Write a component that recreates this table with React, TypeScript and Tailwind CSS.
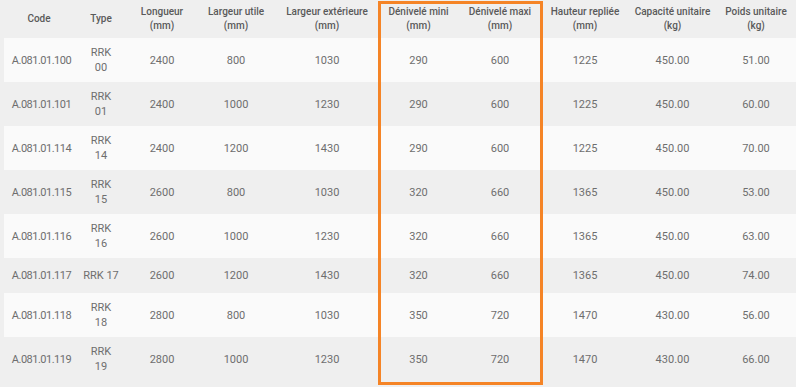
import React from "react";

type Row = {
  code: string;
  type: string;
  longueur: string;
  utile: string;
  ext: string;
  mini: string;
  maxi: string;
  hauteur: string;
  capacite: string;
  poids: string;
};

const rows: Row[] = [
  { code: "A.081.01.100", type: "RRK\n00", longueur: "2400", utile: "800", ext: "1030", mini: "290", maxi: "600", hauteur: "1225", capacite: "450.00", poids: "51.00" },
  { code: "A.081.01.101", type: "RRK\n01", longueur: "2400", utile: "1000", ext: "1230", mini: "290", maxi: "600", hauteur: "1225", capacite: "450.00", poids: "60.00" },
  { code: "A.081.01.114", type: "RRK\n14", longueur: "2400", utile: "1200", ext: "1430", mini: "290", maxi: "600", hauteur: "1225", capacite: "450.00", poids: "70.00" },
  { code: "A.081.01.115", type: "RRK\n15", longueur: "2600", utile: "800", ext: "1030", mini: "320", maxi: "660", hauteur: "1365", capacite: "450.00", poids: "53.00" },
  { code: "A.081.01.116", type: "RRK\n16", longueur: "2600", utile: "1000", ext: "1230", mini: "320", maxi: "660", hauteur: "1365", capacite: "450.00", poids: "63.00" },
  { code: "A.081.01.117", type: "RRK 17", longueur: "2600", utile: "1200", ext: "1430", mini: "320", maxi: "660", hauteur: "1365", capacite: "450.00", poids: "74.00" },
  { code: "A.081.01.118", type: "RRK\n18", longueur: "2800", utile: "800", ext: "1030", mini: "350", maxi: "720", hauteur: "1470", capacite: "430.00", poids: "56.00" },
  { code: "A.081.01.119", type: "RRK\n19", longueur: "2800", utile: "1000", ext: "1230", mini: "350", maxi: "720", hauteur: "1470", capacite: "430.00", poids: "66.00" },
];

const headers = [
  "Code",
  "Type",
  "Longueur\n(mm)",
  "Largeur utile\n(mm)",
  "Largeur extérieure\n(mm)",
  "Dénivelé mini\n(mm)",
  "Dénivelé maxi\n(mm)",
  "Hauteur repliée\n(mm)",
  "Capacité unitaire\n(kg)",
  "Poids unitaire\n(kg)",
];

const gridCols =
  "grid grid-cols-[70px_54px_68px_80px_102px_81px_82px_88px_87px_80px]";

export default function App() {
  return (
    <div className="relative w-[796px] h-[387px] bg-[#efefef] pl-[4px] font-['Roboto',sans-serif] overflow-hidden">
      <div className={`${gridCols} h-[38px] items-center`}>
        {headers.map((h) => (
          <div
            key={h}
            className="text-center whitespace-pre-line text-[10px] leading-[14px] font-medium text-[#5a5a5a]"
          >
            {h}
          </div>
        ))}
      </div>
      {rows.map((r, i) => {
        const cells = [r.code, r.type, r.longueur, r.utile, r.ext, r.mini, r.maxi, r.hauteur, r.capacite, r.poids];
        const single = !r.type.includes("\n");
        return (
          <div
            key={r.code}
            className={`${gridCols} items-center ${single ? "h-[35px]" : "h-[44px]"} ${i % 2 === 0 ? "bg-[#fafafa]" : ""}`}
          >
            {cells.map((c, j) => (
              <div
                key={j}
                className={`text-center whitespace-pre-line text-[11px] leading-[15px] text-[#6e6e6e] ${j === 0 ? "tracking-[-0.5px] pl-[5px]" : ""}`}
              >
                {c}
              </div>
            ))}
          </div>
        );
      })}
      <div className="absolute left-[378px] top-[1px] w-[165px] h-[384px] border-[3px] border-[#f58426] pointer-events-none" />
    </div>
  );
}
